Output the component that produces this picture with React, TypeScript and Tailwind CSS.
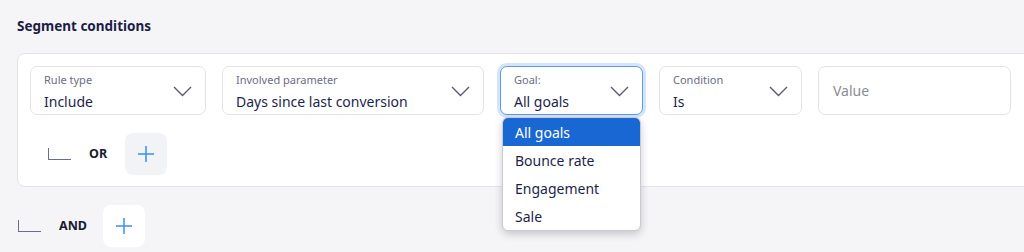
import React from "react";

const font = { fontFamily: '"Noto Sans", "Open Sans", sans-serif' };

const Chevron = () => (
  <svg className="h-[12px] w-[19px] shrink-0" viewBox="0 0 19 12" fill="none" stroke="#5a5a70" strokeWidth="1.4">
    <path d="M1 2l8.5 8.5L18 2" />
  </svg>
);

const Plus = () => (
  <svg className="h-[18px] w-[18px]" viewBox="0 0 18 18" fill="none" stroke="#3d8ef0" strokeWidth="1.5">
    <path d="M9 1v16M1 9h16" />
  </svg>
);

const SelectField = ({ label, value, width, focused }: { label: string; value: string; width: string; focused?: boolean }) => (
  <div
    className={`relative flex h-[49px] shrink-0 items-center justify-between rounded-[7px] border bg-white pl-[13px] pr-[13px] ${width} ${
      focused ? "border-[#5d9cec] shadow-[0_0_0_3px_#d3e4fb]" : "border-[#e3e4ea]"
    }`}
  >
    <div className="mt-[2px] flex flex-col">
      <span className="text-[11px] leading-[16px] text-[#6c6d85]">{label}</span>
      <span className="mt-[4px] text-[14px] leading-[20px] text-[#1e1f4b]">{value}</span>
    </div>
    <Chevron />
  </div>
);

const Connector = () => <div className="h-[12px] w-[23px] border-b-[1.5px] border-l-[1.5px] border-[#6c6d8e]" />;

export default function App() {
  const goals = ["All goals", "Bounce rate", "Engagement", "Sale"];
  return (
    <div style={font} className="h-[252px] w-[1024px] overflow-hidden bg-[#f5f5f8] pl-[17px] pt-[16px]">
      <h2 className="text-[13.5px] font-bold leading-[20px] text-[#1c1d45]">Segment conditions</h2>

      <div className="mt-[17px] w-[1040px] rounded-[8px] border border-[#e4e5eb] bg-white px-[12px] pb-[11px] pt-[12px]">
        <div className="flex gap-[16px]">
          <SelectField label="Rule type" value="Include" width="w-[176px]" />
          <SelectField label="Involved parameter" value="Days since last conversion" width="w-[262px]" />
          <div className="relative">
            <SelectField label="Goal:" value="All goals" width="w-[143px]" focused />
            <div className="absolute left-[2px] top-[51px] z-10 w-[139px] overflow-hidden rounded-[6px] border border-[#c9cad3] bg-white shadow-[0_3px_8px_rgba(0,0,0,0.2)]">
              {goals.map((g, i) => (
                <div
                  key={g}
                  className={`flex h-[28px] items-center pl-[12px] text-[14px] ${
                    i === 0 ? "bg-[#1967d2] text-white" : "text-[#1e1f4b]"
                  }`}
                >
                  {g}
                </div>
              ))}
            </div>
          </div>
          <SelectField label="Condition" value="Is" width="w-[143px]" />
          <div className="flex h-[49px] w-[193px] shrink-0 items-center rounded-[7px] border border-[#e3e4ea] bg-white pl-[14px] text-[14px] text-[#8b8b93]">
            Value
          </div>
        </div>

        <div className="mt-[18px] flex items-center">
          <div className="ml-[18px]">
            <Connector />
          </div>
          <span className="ml-[18px] w-[18px] text-[12.5px] font-bold text-[#1a1a2e]">OR</span>
          <button className="ml-[18px] flex h-[42px] w-[42px] items-center justify-center rounded-[8px] bg-[#f2f3f6]">
            <Plus />
          </button>
        </div>
      </div>

      <div className="mt-[18px] flex items-center">
        <div className="ml-[1px]">
          <Connector />
        </div>
        <span className="ml-[18px] w-[27px] text-[12.5px] font-bold text-[#1a1a2e]">AND</span>
        <button className="ml-[17px] flex h-[42px] w-[42px] items-center justify-center rounded-[8px] bg-white">
          <Plus />
        </button>
      </div>
    </div>
  );
}
